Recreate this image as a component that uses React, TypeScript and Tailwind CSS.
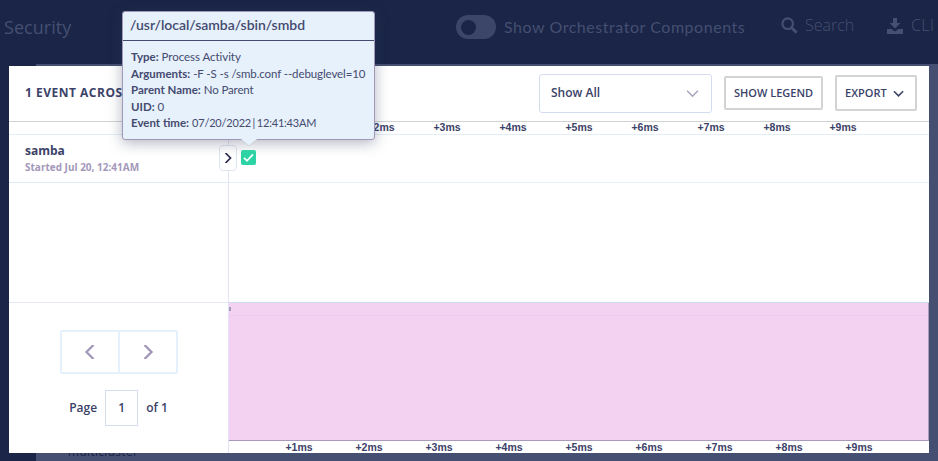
import React from "react";

const topTicks = ["+2ms", "+3ms", "+4ms", "+5ms", "+6ms", "+7ms", "+8ms", "+9ms"];
const bottomTicks = ["+1ms", ...topTicks];

const details = [
  { label: "Type:", value: "Process Activity", style: "tracking-[-0.05px]" },
  { label: "Arguments:", value: "-F -S -s /smb.conf --debuglevel=10", style: "tracking-[-0.1px]" },
  { label: "Parent Name:", value: "No Parent", style: "tracking-[-0.14px]" },
  { label: "UID:", value: "0", style: "" },
  { label: "Event time:", value: "07/20/2022 | 12:41:43AM", style: "tracking-[-0.2px] [word-spacing:-1px] text-[11px]" },
];

function Chevron({ d, className, width = 2 }: { d: string; className: string; width?: number }) {
  return (
    <svg className={className} viewBox="0 0 12 12" fill="none" stroke="currentColor" strokeWidth={width}>
      <path d={d} />
    </svg>
  );
}

const DOWN = "M1 3.5l5 5 5-5";
const LEFT = "M9 0L3 6l6 6";
const RIGHT = "M3 0l6 6-6 6";

function Backdrop() {
  return (
    <div className="flex h-[461px] flex-col bg-[#1a2547] text-[#454f71]">
      <header className="flex h-16 shrink-0 items-center pt-[1px] pb-[11px] pl-1">
        <span className="w-[452px] font-['Open_Sans',sans-serif] text-[18px] leading-6 tracking-[0.05px]">Security</span>
        <span className="flex h-6 w-10 shrink-0 items-center rounded-full bg-[#3c4668] pl-[5px]">
          <span className="h-[15px] w-[15px] rounded-full bg-[#1a2547]" />
        </span>
        <span className="ml-2 w-[277px] shrink-0 whitespace-nowrap font-['Lato',sans-serif] text-[16px] leading-6 tracking-[0.54px]">
          Show Orchestrator Components
        </span>
        <svg className="-mt-[3px] h-[17px] w-[17px] shrink-0" viewBox="0 0 17 17" fill="none" stroke="currentColor">
          <circle cx="6.7" cy="6.7" r="5.3" strokeWidth="2.2" />
          <path d="M10.7 10.7l5 5" strokeWidth="2.8" />
        </svg>
        <span className="-mt-1 ml-[7px] w-[82px] shrink-0 font-['Open_Sans',sans-serif] text-[16px] leading-6 font-light">Search</span>
        <svg className="-mt-[2px] h-4 w-4 shrink-0" viewBox="0 0 16 16" fill="currentColor">
          <path d="M6 0h4v5h3.5L8 10.5 2.500 5H6zM0 11h4.500L8 13.500 11.500 11H16v5H0z" />
        </svg>
        <span className="-mt-1 ml-2 shrink-0 font-['Open_Sans',sans-serif] text-[16px] leading-6 font-light tracking-[0.4px]">CLI</span>
      </header>
      <div className="ml-9 flex grow flex-col items-start justify-end bg-[#454f71] pl-8">
        <span className="mb-[1px] font-['Open_Sans',sans-serif] text-[12px] leading-4 tracking-[0.3px] text-[#1a2547]">multicluster</span>
      </div>
    </div>
  );
}

function Tooltip() {
  return (
    <div className="absolute top-[11px] left-[122px] flex h-[129px] w-[253px] flex-col rounded-[3px] border border-[#9f98b9] bg-[#e6f1fb] font-['Lato',sans-serif] text-[#454a70] shadow-[0_3px_14px_rgba(50,60,90,0.38)]">
      <div className="h-[29px] shrink-0 border-b border-[#454a70] pl-[7px] text-[14px] leading-[26px] font-semibold tracking-[-0.03px]">
        /usr/local/samba/sbin/smbd
      </div>
      <div className="flex flex-col pt-[8px] pl-2">
        {details.map((item) => (
          <p key={item.label} className="h-[16.5px] text-[11.500px] leading-[16.500px] whitespace-nowrap">
            <b className="font-bold">{item.label}</b> <span className={item.style}>{item.value}</span>
          </p>
        ))}
      </div>
      <svg className="absolute top-[127px] left-[118px] h-2 w-4" viewBox="0 0 16 8">
        <path d="M0 0h16L8 7z" fill="#e6f1fb" />
        <path d="M1 1l7 6 7-6" fill="none" stroke="#cfd2da" />
      </svg>
    </div>
  );
}

function EventPanel() {
  return (
    <section className="absolute top-[66px] left-[9px] flex h-[387px] w-[920px] flex-col bg-white text-[#3b4268]">
      <div className="flex h-[56px] shrink-0 items-center border-b border-[#cfd1d3] pl-4">
        <h1 className="-mt-[2px] w-[514px] shrink-0 text-[12px] font-bold tracking-[0.5px] whitespace-nowrap">1 EVENT ACROS</h1>
        <div className="-mt-[1px] flex h-[39px] w-[173px] shrink-0 items-center justify-between rounded-[3px] border border-[#d5dcef] pr-3 pl-[11px] text-[12px] font-semibold">
          Show All
          <Chevron d={DOWN} className="h-[13px] w-[13px] text-[#aaa5be]" width={1.5} />
        </div>
        <button className="-mt-[1px] ml-3 h-[34px] w-[99px] shrink-0 rounded-[2px] border-2 border-[#d2d3d5] text-[11px] font-semibold whitespace-nowrap">
          SHOW LEGEND
        </button>
        <button className="-mt-[1px] ml-3 flex h-9 w-[82px] shrink-0 items-center justify-between rounded-[2px] border-2 border-[#d2d3d5] pr-[11px] pl-2 text-[11px] font-semibold">
          EXPORT
          <Chevron d={DOWN} className="h-[11px] w-[11px]" width={1.7} />
        </button>
      </div>
      <div className="flex h-[13px] shrink-0 border-b border-[#e2edf6] pl-[339px] font-['Liberation_Sans',sans-serif] text-[10.500px] leading-[10px] font-bold">
        {topTicks.map((tick) => (
          <span key={tick} className="w-[66px] text-center">{tick}</span>
        ))}
      </div>
      <div className="flex grow">
        <aside className="flex w-[220px] shrink-0 flex-col border-r border-[#e5e2f5]">
          <div className="h-[48px] border-b border-[#e1e7f5] pt-[8px] pl-4">
            <h2 className="text-[12px] leading-[16px] font-bold">samba</h2>
            <p className="mt-[1px] text-[10px] leading-[15px] font-bold text-[#a398ba]">Started Jul 20, 12:41AM</p>
          </div>
          <div className="h-[120px] border-b border-[#e4e7f6]" />
          <div className="flex flex-col items-center pt-[27px]">
            <div className="ml-[1px] flex h-11 w-[118px] rounded-[2px] border-2 border-[#e4f0fb] text-[#a398ba]">
              <button className="flex w-[58px] items-center justify-center border-r-2 border-[#e4f0fb]">
                <Chevron d={LEFT} className="h-[14px] w-[14px]" />
              </button>
              <button className="flex grow items-center justify-center">
                <Chevron d={RIGHT} className="h-[14px] w-[14px]" />
              </button>
            </div>
            <div className="mt-4 flex items-center text-[12px] font-semibold">
              <span>Page</span>
              <span className="mx-2 flex h-9 w-[33px] items-center justify-center border border-[#d4dcee]">1</span>
              <span>of 1</span>
            </div>
          </div>
        </aside>
        <div className="flex grow flex-col">
          <div className="h-[48px] border-b border-[#e4eff8]" />
          <div className="h-[120px] border-b border-[#cfdce9]" />
          <div className="h-[138px] border-r border-b border-[#a99abc] bg-[#f3d1f1] pt-1">
            <div className="h-1 w-[2px] bg-[#a398ba]" />
            <div className="mt-1 border-b border-dotted border-[#e6c8e8]" />
          </div>
          <div className="flex h-3 pl-[35px] font-['Liberation_Sans',sans-serif] text-[10.500px] leading-[12px] font-bold">
            {bottomTicks.map((tick) => (
              <span key={tick} className="w-[70px] shrink-0 text-center">{tick}</span>
            ))}
          </div>
        </div>
      </div>
    </section>
  );
}

export default function App() {
  return (
    <main className="relative h-[461px] w-[938px] overflow-hidden font-['Open_Sans',sans-serif]">
      <Backdrop />
      <EventPanel />
      <button className="absolute top-[145px] left-[219px] flex h-[26px] w-[18px] items-center justify-center rounded-[4px] border border-[#dfe5ef] bg-white pr-[1px] text-[#26264f]">
        <Chevron d={RIGHT} className="h-[10px] w-[10px]" width={2} />
      </button>
      <Tooltip />
      <div className="absolute top-[150px] left-[241px] flex h-[15px] w-[15px] items-center justify-center rounded-[2px] bg-[#2bd3a5]">
        <svg className="h-[11px] w-[11px]" viewBox="0 0 11 11" fill="none" stroke="white" strokeWidth="1.7">
          <path d="M1 5.800l3 3 6-6.500" />
        </svg>
      </div>
    </main>
  );
}
